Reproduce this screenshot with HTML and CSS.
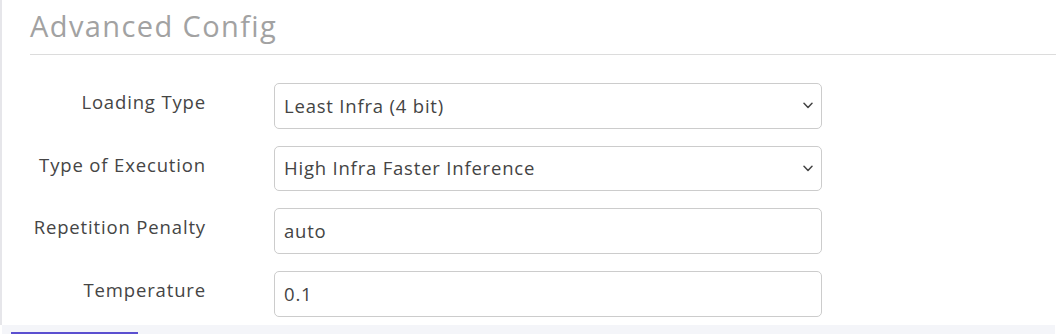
FILE: index.html
```html
<!DOCTYPE html>
<html lang="en">
<head>
<meta charset="utf-8">
<title>Advanced Config</title>
<link rel="stylesheet" href="styles.css">
</head>
<body>
<div class="page">
  <div class="panel">
    <h2 class="title">Advanced Config</h2>
    <form class="form">
      <label class="label">Loading Type</label>
      <div class="field select">
        <span class="value">Least Infra (4 bit)</span>
        <svg class="chev" width="10" height="7" viewBox="0 0 10 7"><path d="M1 1.2 L5 5.4 L9 1.2" fill="none" stroke="#444" stroke-width="1.5" stroke-linecap="round" stroke-linejoin="round"/></svg>
      </div>
      <label class="label">Type of Execution</label>
      <div class="field select">
        <span class="value">High Infra Faster Inference</span>
        <svg class="chev" width="10" height="7" viewBox="0 0 10 7"><path d="M1 1.2 L5 5.4 L9 1.2" fill="none" stroke="#444" stroke-width="1.5" stroke-linecap="round" stroke-linejoin="round"/></svg>
      </div>
      <label class="label">Repetition Penalty</label>
      <div class="field"><span class="value">auto</span></div>
      <label class="label">Temperature</label>
      <div class="field"><span class="value">0.1</span></div>
    </form>
  </div>
  <div class="footer"><span class="tab"></span></div>
</div>
</body>
</html>
```
FILE: styles.css
```css
html, body {
  margin: 0;
  padding: 0;
  background: #ffffff;
}
.page {
  width: 1056px;
  height: 334px;
  display: flex;
  flex-direction: column;
  font-family: "Open Sans", "Noto Sans", sans-serif;
  overflow: hidden;
}
.panel {
  height: 325px;
  border-left: 2px solid #e6e6ea;
  box-sizing: border-box;
}
.title {
  margin: 0 0 0 28px;
  padding-top: 8px;
  height: 55px;
  box-sizing: border-box;
  border-bottom: 1px solid #dcdcdc;
  font-size: 29px;
  font-weight: 400;
  letter-spacing: 1.4px;
  line-height: 36px;
  color: #a2a2a2;
}
.form {
  display: grid;
  grid-template-columns: 204px 548px;
  column-gap: 68px;
  row-gap: 17px;
  margin-top: 28px;
}
.label {
  text-align: right;
  font-size: 18.5px;
  letter-spacing: 0.85px;
  color: #454545;
  line-height: 24px;
  padding-top: 7px;
}
.field {
  height: 45.67px;
  box-sizing: border-box;
  border: 1px solid #cccccc;
  border-radius: 5px;
  display: flex;
  align-items: center;
  justify-content: space-between;
  padding: 0 8px 0 9px;
  font-size: 18.5px;
  letter-spacing: 0.8px;
  color: #444;
}
.value {
  margin-top: -1px;
}
.footer {
  height: 9px;
  background: #f4f5f9;
  margin-left: 2px;
  margin-right: 1px;
  position: relative;
}
.tab {
  position: absolute;
  left: 9px;
  bottom: 0;
  width: 127px;
  height: 2px;
  background: #5b4fd0;
}
```
